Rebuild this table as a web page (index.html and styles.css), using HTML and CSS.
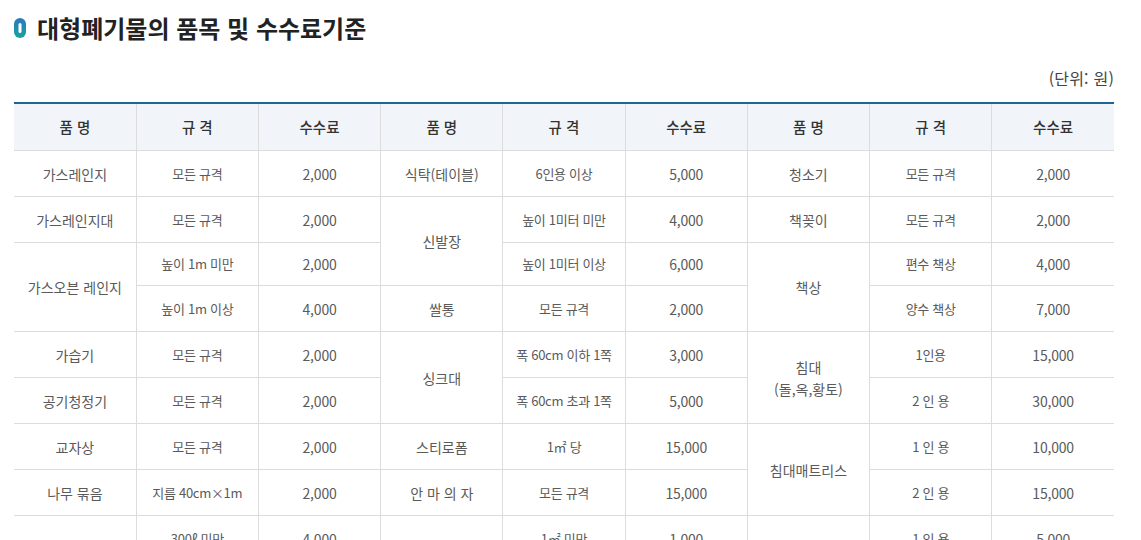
FILE: index.html
```html
<!DOCTYPE html>
<html lang="ko">
<head>
<meta charset="utf-8">
<title>대형폐기물의 품목 및 수수료기준</title>
<link rel="stylesheet" href="styles.css">
</head>
<body>
<div class="page">
  <h2 class="title">
    <svg class="title-icon" width="12" height="20" viewBox="0 0 12 20" aria-hidden="true">
      <defs>
        <linearGradient id="g" x1="0" y1="0" x2="0" y2="1">
          <stop offset="0" stop-color="#2b78c2"/>
          <stop offset="1" stop-color="#17a3a0"/>
        </linearGradient>
      </defs>
      <rect x="0" y="0" width="12" height="20" rx="6" fill="url(#g)"/>
      <rect x="4.5" y="5" width="3" height="10" rx="1.5" fill="#fff"/>
    </svg>
    <span>대형폐기물의 품목 및 수수료기준</span>
  </h2>
  <p class="unit">(단위: 원)</p>
  <table class="fee">
    <colgroup>
      <col><col><col><col><col><col><col><col><col>
    </colgroup>
    <thead>
      <tr>
        <th>품 명</th><th>규 격</th><th>수수료</th>
        <th>품 명</th><th>규 격</th><th>수수료</th>
        <th>품 명</th><th>규 격</th><th>수수료</th>
      </tr>
    </thead>
    <tbody>
      <tr>
        <td>가스레인지</td><td class="spec">모든 규격</td><td class="num">2,000</td>
        <td>식탁(테이블)</td><td class="spec">6인용 이상</td><td class="num">5,000</td>
        <td>청소기</td><td class="spec">모든 규격</td><td class="num">2,000</td>
      </tr>
      <tr>
        <td>가스레인지대</td><td class="spec">모든 규격</td><td class="num">2,000</td>
        <td rowspan="2">신발장</td><td class="spec">높이 1미터 미만</td><td class="num">4,000</td>
        <td>책꽂이</td><td class="spec">모든 규격</td><td class="num">2,000</td>
      </tr>
      <tr class="tight">
        <td rowspan="2">가스오븐 레인지</td><td class="spec">높이 1m 미만</td><td class="num">2,000</td>
        <td class="spec">높이 1미터 이상</td><td class="num">6,000</td>
        <td rowspan="2">책상</td><td class="spec">편수 책상</td><td class="num">4,000</td>
      </tr>
      <tr>
        <td class="spec">높이 1m 이상</td><td class="num">4,000</td>
        <td>쌀통</td><td class="spec">모든 규격</td><td class="num">2,000</td>
        <td class="spec">양수 책상</td><td class="num">7,000</td>
      </tr>
      <tr>
        <td>가습기</td><td class="spec">모든 규격</td><td class="num">2,000</td>
        <td rowspan="2">싱크대</td><td class="spec">폭 60cm 이하 1쪽</td><td class="num">3,000</td>
        <td rowspan="2">침대<br>(돌,옥,황토)</td><td class="spec">1인용</td><td class="num">15,000</td>
      </tr>
      <tr>
        <td>공기청정기</td><td class="spec">모든 규격</td><td class="num">2,000</td>
        <td class="spec">폭 60cm 초과 1쪽</td><td class="num">5,000</td>
        <td class="spec">2 인 용</td><td class="num">30,000</td>
      </tr>
      <tr>
        <td>교자상</td><td class="spec">모든 규격</td><td class="num">2,000</td>
        <td>스티로폼</td><td class="spec">1㎡ 당</td><td class="num">15,000</td>
        <td rowspan="2">침대매트리스</td><td class="spec">1 인 용</td><td class="num">10,000</td>
      </tr>
      <tr>
        <td>나무 묶음</td><td class="spec">지름 40cm×1m</td><td class="num">2,000</td>
        <td>안 마 의 자</td><td class="spec">모든 규격</td><td class="num">15,000</td>
        <td class="spec">2 인 용</td><td class="num">15,000</td>
      </tr>
      <tr>
        <td rowspan="2">냉장고</td><td class="spec">300ℓ 미만</td><td class="num">4,000</td>
        <td rowspan="2">유리</td><td class="spec">1㎡ 미만</td><td class="num">1,000</td>
        <td rowspan="2">침대틀</td><td class="spec">1 인 용</td><td class="num">5,000</td>
      </tr>
      <tr>
        <td class="spec">300ℓ 이상</td><td class="num">7,000</td>
        <td class="spec">1㎡ 이상</td><td class="num">2,000</td>
        <td class="spec">2 인 용</td><td class="num">7,000</td>
      </tr>
    </tbody>
  </table>
</div>
</body>
</html>
```

FILE: styles.css
```css
html, body {
  margin: 0;
  padding: 0;
  background: #fff;
}

body {
  font-family: "Noto Sans CJK KR", "Noto Sans", sans-serif;
  color: #555;
}

.page {
  width: 1100px;
  padding: 0 0 0 14px;
}

.title {
  display: flex;
  align-items: center;
  gap: 11px;
  margin: 0;
  padding-top: 9px;
  height: 36px;
  font-size: 24px;
  font-weight: 700;
  color: #222;
  letter-spacing: 0;
}

.title-icon {
  flex: none;
  margin-top: 1px;
}

.unit {
  margin: 23px 0 0;
  text-align: right;
  font-size: 16px;
  color: #444;
  letter-spacing: 0.2px;
  line-height: 20px;
}

.fee {
  width: 1100px;
  margin-top: 14px;
  border-collapse: collapse;
  table-layout: fixed;
  border-top: 2px solid #1d6797;
}

.fee th,
.fee td {
  height: 45px;
  padding: 0;
  text-align: center;
  vertical-align: middle;
  border: 1px solid #dcdcdc;
  font-size: 14px;
  letter-spacing: 0;
  line-height: 22px;
}

.fee th {
  height: 46px;
  background: #f1f5fa;
  color: #333;
  font-weight: 500;
  font-size: 14.5px;
  border-top: none;
}

.fee td {
  color: #5a5a5a;
}

.fee td.num {
  letter-spacing: -0.2px;
}

.fee td.spec {
  font-size: 13px;
  letter-spacing: -0.3px;
}

.fee tr.tight td {
  height: 42px;
}

.fee th:first-child,
.fee tr > td:first-child:not(.spec) {
  border-left: none;
}

.fee th:last-child,
.fee td:last-child {
  border-right: none;
}
```
